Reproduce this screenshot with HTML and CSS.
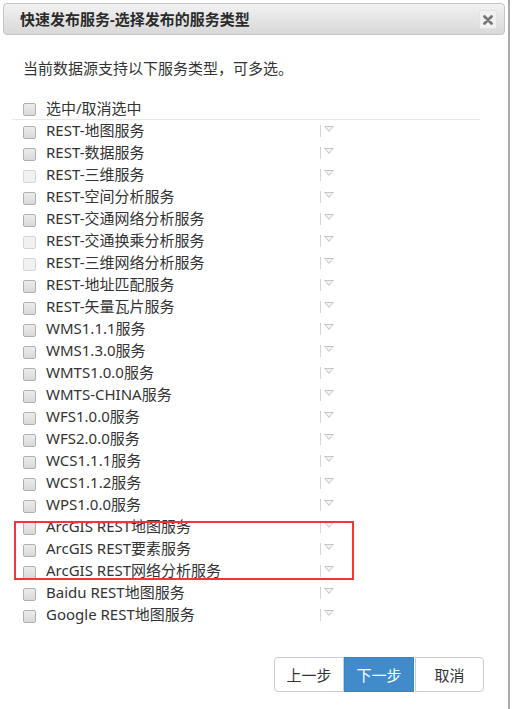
FILE: index.html
```html
<!DOCTYPE html>
<html lang="zh-CN">
<head>
<meta charset="utf-8">
<title>快速发布服务</title>
<link rel="stylesheet" href="styles.css">
</head>
<body>
<div class="dialog">
  <div class="header">
    <div class="title">快速发布服务-选择发布的服务类型</div>
    <div class="close"><svg width="10" height="10" viewBox="0 0 10 10"><path d="M1.5 1.5 L8.5 8.5 M8.5 1.5 L1.5 8.5" stroke="#777" stroke-width="2.8" stroke-linecap="round"/></svg></div>
  </div>
  <div class="content">
    <p class="intro">当前数据源支持以下服务类型，可多选。</p>
    <div class="select-all"><span class="cb"></span><span class="label">选中/取消选中</span></div>
    <div class="list">
      <div class="row"><span class="cb"></span><span class="name">REST-地图服务</span><span class="sep"></span><span class="tri"></span></div>
      <div class="row"><span class="cb"></span><span class="name">REST-数据服务</span><span class="sep"></span><span class="tri"></span></div>
      <div class="row"><span class="cb off"></span><span class="name">REST-三维服务</span><span class="sep"></span><span class="tri"></span></div>
      <div class="row"><span class="cb"></span><span class="name">REST-空间分析服务</span><span class="sep"></span><span class="tri"></span></div>
      <div class="row"><span class="cb"></span><span class="name">REST-交通网络分析服务</span><span class="sep"></span><span class="tri"></span></div>
      <div class="row"><span class="cb off"></span><span class="name">REST-交通换乘分析服务</span><span class="sep"></span><span class="tri"></span></div>
      <div class="row"><span class="cb off"></span><span class="name">REST-三维网络分析服务</span><span class="sep"></span><span class="tri"></span></div>
      <div class="row"><span class="cb"></span><span class="name">REST-地址匹配服务</span><span class="sep"></span><span class="tri"></span></div>
      <div class="row"><span class="cb"></span><span class="name">REST-矢量瓦片服务</span><span class="sep"></span><span class="tri"></span></div>
      <div class="row"><span class="cb"></span><span class="name">WMS1.1.1服务</span><span class="sep"></span><span class="tri"></span></div>
      <div class="row"><span class="cb"></span><span class="name">WMS1.3.0服务</span><span class="sep"></span><span class="tri"></span></div>
      <div class="row"><span class="cb"></span><span class="name">WMTS1.0.0服务</span><span class="sep"></span><span class="tri"></span></div>
      <div class="row"><span class="cb"></span><span class="name">WMTS-CHINA服务</span><span class="sep"></span><span class="tri"></span></div>
      <div class="row"><span class="cb"></span><span class="name">WFS1.0.0服务</span><span class="sep"></span><span class="tri"></span></div>
      <div class="row"><span class="cb"></span><span class="name">WFS2.0.0服务</span><span class="sep"></span><span class="tri"></span></div>
      <div class="row"><span class="cb"></span><span class="name">WCS1.1.1服务</span><span class="sep"></span><span class="tri"></span></div>
      <div class="row"><span class="cb"></span><span class="name">WCS1.1.2服务</span><span class="sep"></span><span class="tri"></span></div>
      <div class="row"><span class="cb"></span><span class="name">WPS1.0.0服务</span><span class="sep"></span><span class="tri"></span></div>
      <div class="row"><span class="cb"></span><span class="name">ArcGIS REST地图服务</span><span class="sep"></span><span class="tri"></span></div>
      <div class="row"><span class="cb"></span><span class="name">ArcGIS REST要素服务</span><span class="sep"></span><span class="tri"></span></div>
      <div class="row"><span class="cb"></span><span class="name">ArcGIS REST网络分析服务</span><span class="sep"></span><span class="tri"></span></div>
      <div class="row"><span class="cb"></span><span class="name">Baidu REST地图服务</span><span class="sep"></span><span class="tri"></span></div>
      <div class="row"><span class="cb"></span><span class="name">Google REST地图服务</span><span class="sep"></span><span class="tri"></span></div>
    </div>
    <div class="footer">
      <button class="btn">上一步</button><button class="btn primary">下一步</button><button class="btn">取消</button>
    </div>
  </div>
  <div class="highlight"></div>
</div>
</body>
</html>
```

FILE: styles.css
```css
* { box-sizing: border-box; }
html, body { margin: 0; padding: 0; background: #fff; }
body {
  font-family: "Noto Sans", "Noto Sans CJK SC", sans-serif;
  font-size: 15px;
  color: #333;
}
.dialog {
  position: relative;
  width: 510px;
  height: 709px;
  border-right: 2px solid #a9a9a9;
  padding-top: 3px;
}
.header {
  margin: 0 3px 0 3px;
  height: 32px;
  border: 1px solid #c4c4c4;
  border-radius: 4px;
  background: linear-gradient(#f2f2f2, #d8d8d8);
  display: flex;
  align-items: center;
  justify-content: space-between;
  padding: 0 7px 0 16px;
}
.title {
  font-weight: bold;
  font-size: 15px;
  color: #2b2b2b;
  line-height: 20px;
}
.close {
  width: 18px;
  height: 19px;
  margin-top: 1px;
  background: #f1f1f1;
  border: 1px solid #e2e2e2;
  border-radius: 2px;
  display: flex;
  align-items: center;
  justify-content: center;
}
.content { padding: 0 0 0 12px; }
.intro {
  margin: 22px 0 0 11px;
  line-height: 22px;
}
.select-all {
  margin-top: 18px;
  height: 23px;
  display: flex;
  align-items: center;
  padding-left: 11px;
  width: 468px;
  border-bottom: 1px solid #e8e8e8;
}
.cb {
  flex: none;
  width: 13px;
  height: 13px;
  border: 1px solid #b0b0b0;
  border-radius: 2px;
  background: linear-gradient(#ececec, #d9d9d9);
  margin-top: 3px;
}
.cb.off {
  border-color: #d6d6d6;
  background: #f1f1f1;
}
.label, .name { margin-left: 10px; line-height: 22px; white-space: nowrap; }
.name { margin-top: -2px; }
.list { width: 468px; }
.row {
  height: 22px;
  display: flex;
  align-items: center;
  padding-left: 11px;
}
.name { width: 274px; }
.sep {
  width: 1px;
  height: 12px;
  background: #d4d4d4;
  margin-top: -1px;
}
.tri {
  width: 10px;
  height: 6px;
  margin-left: 3px;
  margin-top: -4px;
  background: #c4c4c4;
  clip-path: polygon(0 0, 100% 0, 50% 100%);
  position: relative;
}
.tri::after {
  content: "";
  position: absolute;
  left: 1.5px;
  top: 1px;
  width: 7px;
  height: 3.5px;
  background: #f4f4f4;
  clip-path: polygon(0 0, 100% 0, 50% 100%);
}
.footer {
  display: flex;
  justify-content: flex-end;
  padding-right: 24px;
  margin-top: 31px;
}
.btn {
  font-family: "Noto Sans", "Noto Sans CJK SC", sans-serif;
  font-size: 15px;
  color: #333;
  height: 35px;
  width: 70px;
  padding: 0;
  background: #fff;
  border: 1px solid #cccccc;
  border-radius: 4px;
}
.btn:first-child { border-top-right-radius: 0; border-bottom-right-radius: 0; }
.btn.primary {
  background: #428bca;
  border-color: #3b82c0;
  color: #fff;
  border-radius: 0;
}
.btn:last-child { width: 69px; margin-left: 1px; border-top-left-radius: 0; border-bottom-left-radius: 0; }
.highlight {
  position: absolute;
  left: 14px;
  top: 521px;
  width: 340px;
  height: 59px;
  border: 2px solid #f53535;
}
```
